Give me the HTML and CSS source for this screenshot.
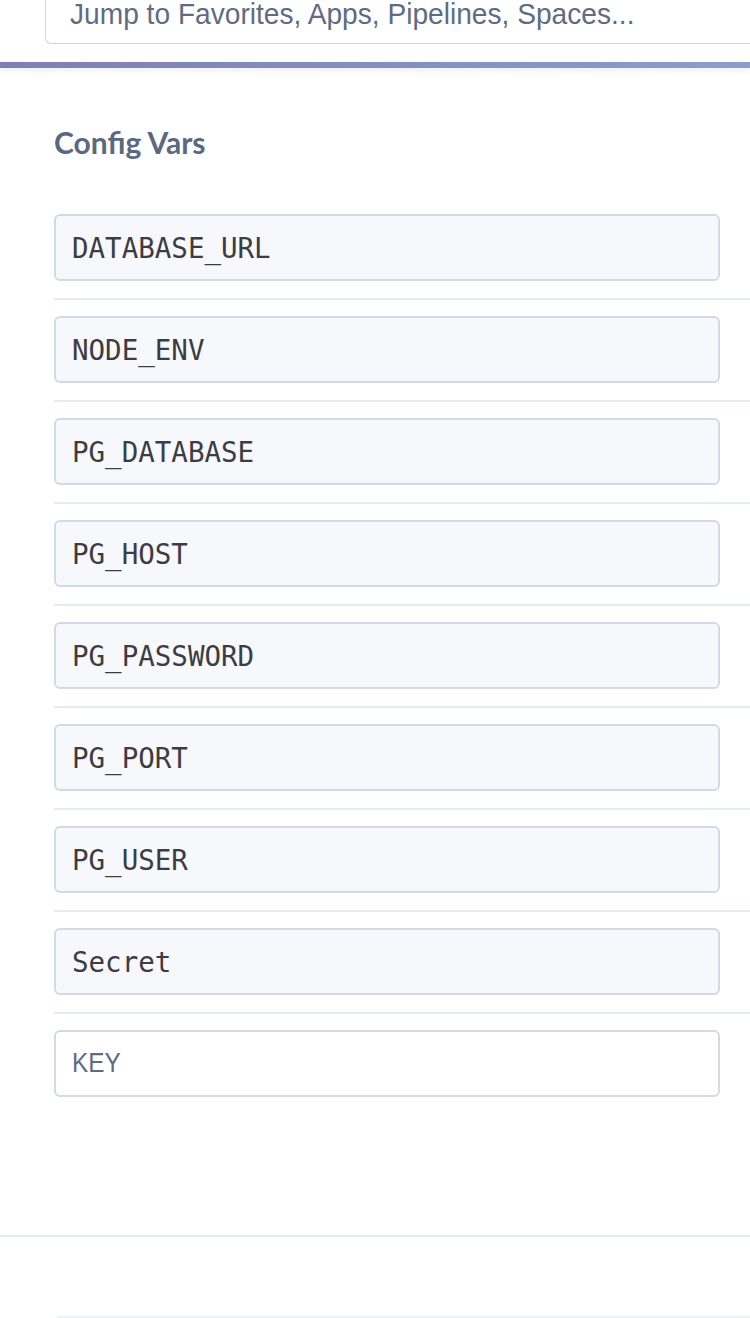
FILE: index.html
```html
<!DOCTYPE html>
<html lang="en">
<head>
<meta charset="utf-8">
<title>Config Vars</title>
<link rel="stylesheet" href="styles.css">
</head>
<body>
<header class="topbar">
  <div class="search">
    <span class="search-ph">Jump to Favorites, Apps, Pipelines, Spaces...</span>
  </div>
</header>
<div class="accent"></div>
<main class="content">
  <h2 class="title">Config Vars</h2>
  <div class="vars">
    <div class="row"><div class="field">DATABASE_URL</div></div>
    <div class="row"><div class="field">NODE_ENV</div></div>
    <div class="row"><div class="field">PG_DATABASE</div></div>
    <div class="row"><div class="field">PG_HOST</div></div>
    <div class="row"><div class="field">PG_PASSWORD</div></div>
    <div class="row"><div class="field">PG_PORT</div></div>
    <div class="row"><div class="field">PG_USER</div></div>
    <div class="row"><div class="field">Secret</div></div>
    <div class="row last"><div class="field empty"><span class="ph">KEY</span></div></div>
  </div>
</main>
<div class="divider"></div>
<div class="footer-space"></div>
<div class="divider inset"></div>
</body>
</html>
```

FILE: styles.css
```css
html, body {
  margin: 0;
  padding: 0;
  background: #ffffff;
}
body {
  font-family: "Liberation Sans", Arial, sans-serif;
  width: 750px;
  overflow: hidden;
}
.topbar {
  height: 62px;
  padding-left: 45px;
  box-sizing: border-box;
  overflow: hidden;
}
.search {
  margin-top: -28px;
  height: 72px;
  box-sizing: border-box;
  border: 1.5px solid #cfd6e4;
  border-right: none;
  border-radius: 6px 0 0 6px;
  background: #fff;
  display: flex;
  align-items: flex-end;
  padding: 0 0 15px 24px;
}
.search-ph {
  display: inline-block;
  font-size: 29px;
  color: #5f6b85;
  transform: scaleX(0.97);
  transform-origin: left center;
  white-space: nowrap;
  line-height: 28px;
}
.accent {
  height: 6px;
  background: linear-gradient(90deg, #7f7fb4 0%, #8a9fca 100%);
  box-shadow: 0 2px 6px rgba(60, 70, 100, 0.10);
  position: relative;
}
.content {
  padding: 0 0 0 54px;
}
.title {
  margin: 0;
  padding-top: 58px;
  font-family: Lato, "Liberation Sans", sans-serif;
  font-weight: 700;
  font-size: 30px;
  line-height: 32px;
  color: #5a6981;
  height: 32px;
}
.vars {
  margin-top: 40px;
}
.row {
  padding: 16px 30px 17px 0;
  border-bottom: 2px solid #e6eaf1;
}
.row.last {
  border-bottom: none;
  padding-bottom: 138px;
}
.field {
  height: 67px;
  box-sizing: border-box;
  border: 2px solid #d2d9e7;
  border-radius: 6px;
  background: #f7f8fb;
  display: flex;
  align-items: center;
  padding-left: 16px;
  font-family: "DejaVu Sans Mono", "Liberation Mono", monospace;
  font-size: 27.5px;
  color: #3c3c42;
  white-space: nowrap;
}
.field.empty {
  background: #ffffff;
}
.ph {
  display: inline-block;
  font-family: "Liberation Sans", Arial, sans-serif;
  font-size: 27px;
  color: #5f6b85;
  transform: scaleX(0.9);
  transform-origin: left center;
}
.divider {
  height: 2px;
  background: #e6eaf1;
}
.divider.inset {
  margin-left: 57px;
  background: #eef1f6;
}
.footer-space {
  height: 79px;
}
```
